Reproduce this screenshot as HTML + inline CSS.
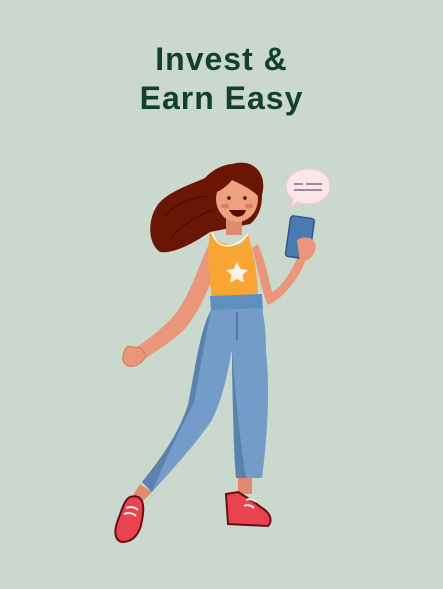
<!DOCTYPE html>
<html><head><meta charset="utf-8"><style>
html,body{margin:0;padding:0}
body{width:443px;height:589px;background:#cbd8ce;position:relative;overflow:hidden;font-family:"Liberation Sans",sans-serif}
h1{position:absolute;top:40px;left:0;width:443px;margin:0;text-align:center;font-size:32px;line-height:39px;font-weight:700;color:#123f2f;letter-spacing:1px}
svg{position:absolute;left:0;top:0}
</style></head><body>
<h1>Invest &amp;<br>Earn Easy</h1>
<svg width="443" height="589" viewBox="0 0 443 589">
<path d="M308 169 C324 169 330 178 330 187 C330 197 320 204 308 204 C304 204 300 203 297 202 L291 207 L293 199 C289 196 286 192 286 187 C286 177 296 169 308 169Z" fill="#fbe6ea" stroke="#f2c9d2" stroke-width="1.2"/>
<path d="M294 184 H303 M306 184 H322 M294 190 H322" stroke="#7a6a86" stroke-width="1.6"/>
<!-- hair back -->
<path d="M232 164 C252 158 268 172 262 195 C262 208 258 218 250 224 L210 232 C195 242 175 254 160 252 C146 242 148 215 160 202 C172 190 192 184 205 178 C212 170 222 165 232 164Z" fill="#6b1505"/>
<path d="M165 215 C180 200 195 198 208 196 M170 240 C180 225 200 215 212 210" stroke="#3d0a02" stroke-width="1" fill="none"/>
<!-- left arm -->
<path d="M212 238 C200 260 190 300 170 320 C155 335 140 345 132 350 L138 362 C150 356 168 344 184 330 C205 305 214 275 220 250Z" fill="#e9967a"/>
<path d="M128 346 C122 352 120 362 128 366 C136 368 144 362 146 355 L140 348Z" fill="#e9967a" stroke="#d07a60" stroke-width="1"/>
<!-- right arm -->
<path d="M252 248 C258 270 262 292 268 305 C280 300 295 285 305 262 L298 256 C290 275 280 288 272 292 C268 275 264 258 258 244Z" fill="#e9967a"/>
<rect x="226" y="215" width="16" height="20" fill="#e08a6e"/>
<ellipse cx="237" cy="199" rx="21" ry="23" fill="#eda17f"/>
<path d="M216 192 C218 172 240 164 258 178 C259 185 259 190 258 196 C250 188 240 184 232 180 C226 187 220 191 216 192Z" fill="#6b1505"/>
<ellipse cx="225" cy="206" rx="4" ry="2.5" fill="#de7b63"/>
<ellipse cx="249" cy="206" rx="4" ry="2.5" fill="#de7b63"/>
<circle cx="229" cy="198" r="1.8" fill="#3a1206"/><circle cx="245" cy="198" r="1.8" fill="#3a1206"/>
<path d="M229 210 C234 220 244 218 246 210Z" fill="#5a0f05"/>
<path d="M210 232 C216 240 220 242 226 244 C236 248 244 244 248 234 C252 250 258 270 258 298 L212 300 C210 280 206 260 210 232Z" fill="#f9a534"/>
<path d="M212 232 C216 248 232 252 248 234" stroke="#fff3e3" stroke-width="1.6" fill="none"/>
<path d="M237 262 l3.5 7 7.5 1 -5.5 5 1.5 7.5 -7-3.5 -7 3.5 1.5-7.5 -5.5-5 7.5-1z" fill="#fff3e6"/>
<rect x="288" y="217" width="24" height="41" rx="3" fill="#4a7bb0" stroke="#2d5786" stroke-width="1.5" transform="rotate(8 300 237)"/>
<path d="M297 240 C304 236 314 236 316 246 C315 256 308 262 300 262 Z" fill="#e9967a"/>
<!-- jeans -->
<path d="M210 296 L262 294 L263 310 L211 312Z" fill="#5d8fbf"/>
<path d="M211 310 C200 330 195 370 188 405 C178 435 160 460 142 482 L152 492 C172 470 195 445 212 420 C224 395 228 370 232 350 C234 390 232 440 236 478 L262 478 C268 430 270 390 266 350 C266 330 264 318 262 308Z" fill="#739dc8"/>
<path d="M211 310 C200 330 195 370 188 405 C178 435 160 460 142 482 L152 492 C165 460 180 430 194 402 C200 370 205 340 211 310Z" fill="#5a82ac"/>
<path d="M232 350 C232 400 234 440 236 478 L246 478 C240 440 236 400 232 350Z" fill="#5a82ac"/>
<path d="M237 312 V340" stroke="#2d5786" stroke-width="1"/>
<path d="M140 484 L152 492 L138 506 L130 500Z" fill="#e08a6e"/>
<path d="M238 478 L252 478 L252 494 L238 494Z" fill="#e08a6e"/>
<path d="M130 497 C140 494 146 500 142 520 C140 535 132 542 122 542 C114 540 114 530 118 520 C122 510 124 500 130 497Z" fill="#e8434f" stroke="#661016" stroke-width="2"/>
<path d="M226 494 L238 492 C244 496 252 500 262 508 C272 514 272 522 268 526 L228 524Z" fill="#e8434f" stroke="#661016" stroke-width="2"/>
<path d="M126 508 C132 506 136 508 138 510 M124 514 C130 512 134 514 136 516" stroke="#fdeaea" stroke-width="2" fill="none"/>
<path d="M246 500 C250 498 254 500 256 502 M244 506 C248 504 252 506 254 508" stroke="#fdeaea" stroke-width="2" fill="none"/>
</svg>
</body></html>
